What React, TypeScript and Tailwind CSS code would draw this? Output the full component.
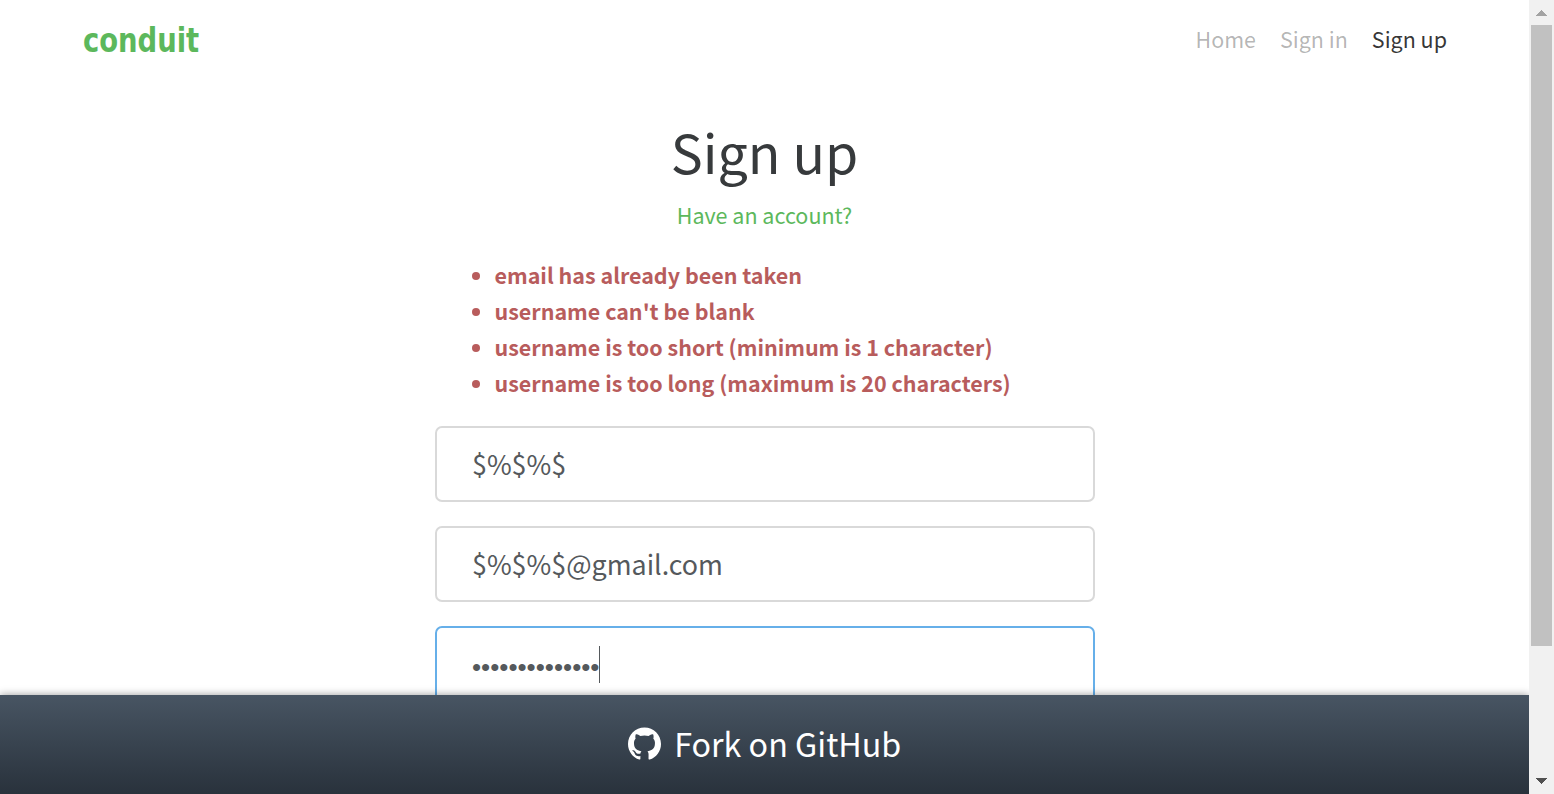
import React from "react";
import { SiGithub } from "react-icons/si";

const errors = [
  "email has already been taken",
  "username can't be blank",
  "username is too short (minimum is 1 character)",
  "username is too long (maximum is 20 characters)",
];

const fieldBase =
  "flex h-[76px] shrink-0 items-center rounded-[7px] border-2 bg-white pr-9 pl-[35.500px] text-[26.850px] text-[#55595c]";

function Scrollbar() {
  return (
    <div className="flex w-[25px] shrink-0 flex-col items-center justify-between bg-[#f1f1f1]">
      <div className="flex h-[25px] items-center">
        <svg width="11" height="6" viewBox="0 0 11 6" fill="#a3a3a3" shapeRendering="crispEdges"><path d="M5.5 0 11 6H0z" /></svg>
      </div>
      <div className="w-[21px] flex-1">
        <div className="h-[621px] bg-[#c1c1c1]" />
      </div>
      <div className="flex h-[25px] items-center pb-[2px]">
        <svg width="11" height="6" viewBox="0 0 11 6" fill="#505050" shapeRendering="crispEdges"><path d="M0 0h11L5.500 6z" /></svg>
      </div>
    </div>
  );
}

export default function App() {
  return (
    <div className="flex h-[794px] w-[1554px] overflow-hidden bg-white font-['Noto_Sans_CJK_SC',sans-serif] text-[#373a3c]">
      <div className="relative flex flex-1 flex-col overflow-hidden">
        <nav className="flex h-[78px] items-center justify-between px-[82px]">
          <a className="origin-left scale-x-[0.91] pt-[4px] pl-px font-['DejaVu_Sans_Condensed','DejaVu_Sans',sans-serif] text-[33.500px] leading-10 font-bold text-[#5cb85c]">conduit</a>
          <div className="flex gap-6 text-[21.500px] text-black/30">
            <a>Home</a>
            <a>Sign in</a>
            <a className="text-black/80">Sign up</a>
          </div>
        </nav>
        <main className="mx-auto flex w-[660px] flex-col pt-[40px]">
          <h1 className="text-center text-[53.700px] leading-[66px]">Sign up</h1>
          <p className="mt-[13px] text-center text-[21.500px] leading-9 text-[#5cb85c]">Have an account?</p>
          <ul className="mt-6 list-disc pl-[60px] text-[21.470px] leading-9 font-bold text-[#b85c5c]">
            {errors.map((e) => (
              <li key={e}>{e}</li>
            ))}
          </ul>
          <div className="mt-[25px] flex flex-col gap-6">
            <div className={`${fieldBase} border-[#d9d9d9]`}>$%$%$</div>
            <div className={`${fieldBase} border-[#d9d9d9]`}>$%$%$@gmail.com</div>
            <div className={`${fieldBase} border-[#66afe9]`}>
              <span className="mt-[6px] font-['Liberation_Sans',sans-serif] text-[26px] leading-9">••••••••••••••</span>
              <span className="h-[37px] w-px bg-[#55595c]" />
            </div>
          </div>
        </main>
        <footer className="absolute inset-x-0 bottom-0 flex h-[99px] items-center justify-center gap-[13.500px] bg-linear-to-b from-[#485563] to-[#29323c] pb-[2px] text-[32.250px] text-white shadow-[0_0_8px_rgba(0,0,0,0.4)]">
          <SiGithub size={33} className="mb-px" />
          <span>Fork on GitHub</span>
        </footer>
      </div>
      <Scrollbar />
    </div>
  );
}
